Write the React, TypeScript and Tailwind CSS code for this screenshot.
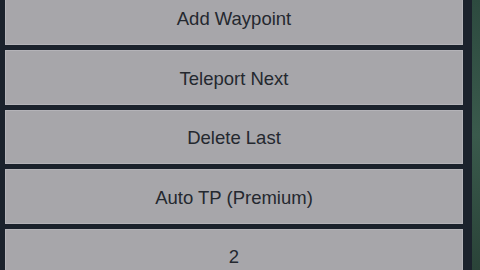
const buttons = ["Add Waypoint", "Teleport Next", "Delete Last", "Auto TP (Premium)", "2"];

export default function App() {
  return (
    <div className="flex h-[270px] w-[480px] overflow-hidden bg-[#1b222c]" style={{ fontFamily: "'Liberation Sans', Roboto, sans-serif" }}>
      <div className="flex w-[472px] flex-col gap-[5px] pl-[5px] pr-[9px] -mt-[9.5px]">
        {buttons.map((label) => (
          <div
            key={label}
            className="flex h-[54.5px] shrink-0 items-center justify-center border border-[#b4b3b8] bg-[#a7a6aa] pt-[3px] text-[18.5px] text-[#24282f]"
          >
            {label}
          </div>
        ))}
      </div>
      <div className="h-full w-[8px] bg-gradient-to-b from-[#2d4a3f] via-[#3a5a4c] to-[#2a4338]" />
    </div>
  );
}
